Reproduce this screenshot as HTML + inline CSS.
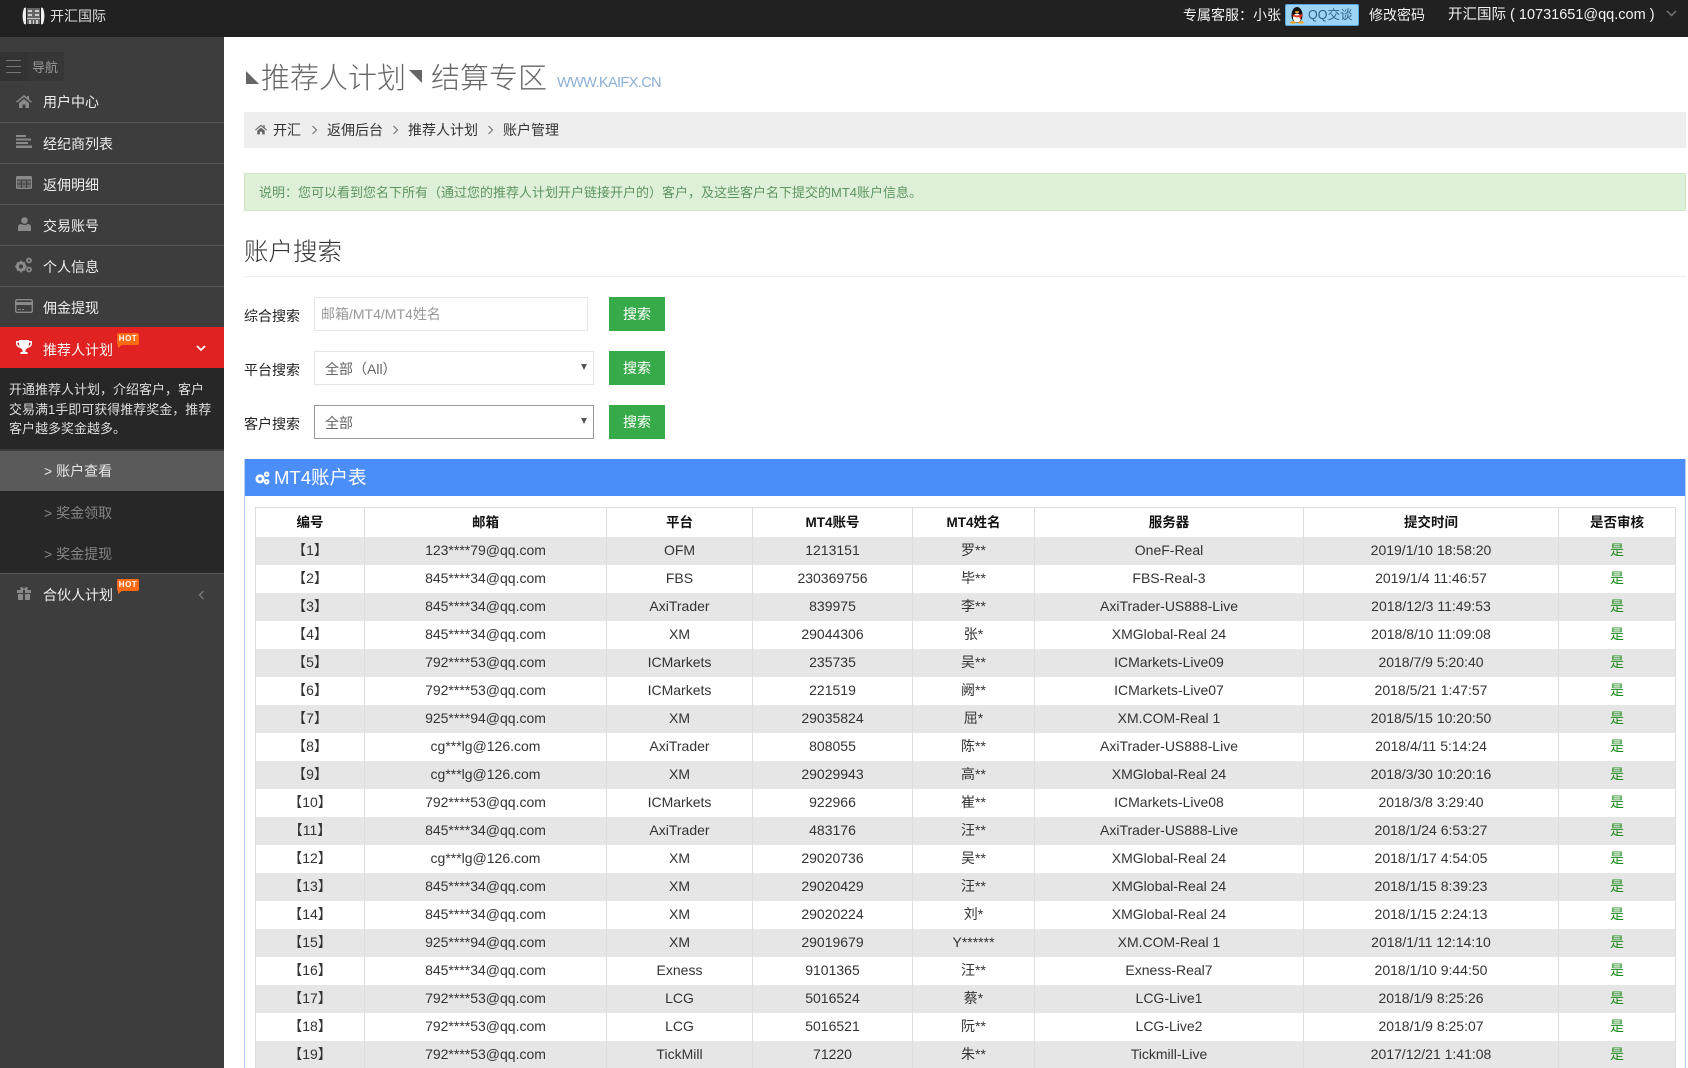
<!DOCTYPE html>
<html lang="zh"><head><meta charset="utf-8"><title>账户查看</title>
<style>
*{box-sizing:border-box}
html,body{margin:0;padding:0;width:1688px;height:1068px;overflow:hidden;background:#fff}
body{position:relative;font-family:"Liberation Sans","Noto Sans CJK SC",sans-serif;font-size:14px;color:#333}
.a{position:absolute;white-space:nowrap}
.t{position:absolute;white-space:nowrap;line-height:20px;height:20px}
.sep{position:absolute;left:0;width:224px;height:1px;background:#585858}
.m{color:#eee;left:43px}
svg{position:absolute;display:block}
.ic{fill:#8a8a8a}
.hot{position:absolute;left:117px;width:22px;height:12px;background:#ff6a13;border-radius:2px;color:#fff;font:bold 8px/12px "Liberation Sans",sans-serif;text-align:center;letter-spacing:.5px}
.hot:after{content:"";position:absolute;left:1px;top:11px;border-left:5px solid #ff6a13;border-bottom:4px solid transparent}
.box{position:absolute;background:#fff;border:1px solid #e5e5e5;line-height:34px;color:#666}
.btn{position:absolute;left:609px;width:56px;height:34px;background:#37aa4a;color:#fff;text-align:center;line-height:34px}
.arr{position:absolute;left:581px;border-left:3px solid transparent;border-right:3px solid transparent;border-top:6px solid #555}
table{position:absolute;left:255px;top:507px;width:1420px;border-collapse:collapse;table-layout:fixed;font-size:14px;color:#333}
td,th{height:28px;padding:0 0 2px;text-align:center;border-left:1px solid #ddd;border-right:1px solid #ddd;white-space:nowrap;line-height:20px;font-weight:400}
th{height:29px;font-size:13.5px;font-weight:700;color:#111;border-top:1px solid #ddd;padding:2px 0 0}
tbody tr:nth-child(odd){background:#e6e6e6}
td:last-child{color:#1e8a1e}
</style></head><body>
<!-- top bar -->
<div class="a" style="left:0;top:0;width:1688px;height:37px;background:#212121"></div>
<svg style="left:22px;top:7px" width="23" height="18" viewBox="0 0 23 18"><path d="M2 1q-3 8 0 16l2 .5V.5z" fill="#eee"/><path d="M21 1q3 8 0 16l-2 .5V.5z" fill="#eee"/><rect x="5" y="1" width="13" height="16" fill="#666"/><path d="M6 3h4v2H6zM13 3h4v2h-4zM6 7h4v2H6zM13 7h4v2h-4zM5 11h13v1H5zM7 13h2v4H7zM11 13h1v4h-1zM14 13h2v4h-2z" fill="#ccc"/></svg>
<div class="t" style="left:50px;top:6px;color:#ddd">开汇国际</div>
<div class="t" style="left:1183px;top:5px;color:#f2f2f2">专属客服：小张</div>
<div class="a" style="left:1285px;top:4px;width:74px;height:22px;background:#9bd4f5;border:1px solid #5aa5dc;border-radius:2px"></div>
<svg style="left:1289px;top:6px" width="16" height="18" viewBox="0 0 16 18"><ellipse cx="8" cy="9" rx="5.500" ry="8" fill="#111"/><ellipse cx="8" cy="12" rx="4" ry="4.500" fill="#fff"/><path d="M3 8q5 3 10 0l1 2-2 1v3l-2-3q-3 1-6-1z" fill="#e0301e"/><ellipse cx="4" cy="16.500" rx="3" ry="1.300" fill="#f5a623"/><ellipse cx="12" cy="16.500" rx="3" ry="1.300" fill="#f5a623"/><ellipse cx="8" cy="6" rx="2" ry="1" fill="#f5a623"/></svg>
<div class="t" style="left:1308px;top:5px;color:#2f5f84;font-size:12.500px">QQ交谈</div>
<div class="t" style="left:1369px;top:5px;color:#f2f2f2">修改密码</div>
<div class="t" style="left:1448px;top:5px;color:#f2f2f2;font-size:14.500px">开汇国际 ( 10731651@qq.com )</div>
<svg style="left:1666px;top:10px" width="11" height="8" viewBox="0 0 11 8"><path d="M1 1l4.500 4.500L10 1" fill="none" stroke="#777" stroke-width="1.500"/></svg>

<!-- sidebar -->
<div class="a" style="left:0;top:37px;width:224px;height:1031px;background:#3d3d3d"></div>
<div class="a" style="left:0;top:52px;width:28px;height:29px;background:#333"></div>
<div class="a" style="left:28px;top:52px;width:36px;height:29px;background:#363636"></div>
<svg style="left:6px;top:60px" width="15" height="13"><path d="M0 .5h15M0 6.500h15M0 12.500h15" stroke="#777"/></svg>
<div class="t" style="left:32px;top:58px;font-size:13px;color:#9a9a9a">导航</div>

<svg class="ic" style="left:16px;top:95px" width="16" height="13" viewBox="0 0 16 13"><path d="M8 0l3 2.500V1h2v3.200L16 6.800l-1 1L8 2 1 7.800l-1-1z"/><path d="M3 8l5-4 5 4v5H9.500V9.500h-3V13H3z"/></svg>
<div class="t m" style="top:92px">用户中心</div>
<div class="sep" style="top:122px"></div>
<svg class="ic" style="left:16px;top:135px" width="16" height="13" viewBox="0 0 16 13"><path d="M0 0h10v2H0zM0 3.500h15v2H0zM0 7h12v2H0zM0 10.500h16V13H0z"/></svg>
<div class="t m" style="top:134px">经纪商列表</div>
<div class="sep" style="top:163px"></div>
<svg style="left:16px;top:176px" width="16" height="13" viewBox="0 0 16 13"><rect x=".5" y=".5" width="15" height="12" rx="1" fill="#6e6e6e" stroke="#8a8a8a"/><path d="M1 4h14M1 8h14M5.500 4v8M10.500 4v8" stroke="#3d3d3d"/><rect x="1" y="1" width="14" height="2.500" fill="#8a8a8a"/></svg>
<div class="t m" style="top:175px">返佣明细</div>
<div class="sep" style="top:204px"></div>
<svg class="ic" style="left:18px;top:217px" width="13" height="14" viewBox="0 0 13 14"><circle cx="6.500" cy="3.500" r="3.300"/><path d="M0 14v-3.500Q0 7 3 7q3.500 2 7 0 3 0 3 3.500V14z"/></svg>
<div class="t m" style="top:216px">交易账号</div>
<div class="sep" style="top:245px"></div>
<svg style="left:15px;top:257px" width="18" height="16" viewBox="0 0 18 16"><circle cx="6" cy="9.500" r="3.600" fill="none" stroke="#8a8a8a" stroke-width="3"/><circle cx="14" cy="3.500" r="2" fill="none" stroke="#8a8a8a" stroke-width="1.800"/><circle cx="14" cy="12.500" r="2" fill="none" stroke="#8a8a8a" stroke-width="1.800"/><path d="M6 3.500v12M0 9.500h12M2 5.500l8 8M10 5.500l-8 8" stroke="#8a8a8a" stroke-width="1.500" stroke-dasharray="1.800 8.400"/></svg>
<div class="t m" style="top:257px">个人信息</div>
<div class="sep" style="top:286px"></div>
<svg style="left:15px;top:299px" width="18" height="14" viewBox="0 0 18 14"><rect x=".7" y=".7" width="16.600" height="12.600" rx="1.500" fill="none" stroke="#8a8a8a" stroke-width="1.400"/><rect x="1" y="3" width="16" height="3" fill="#8a8a8a"/><path d="M3 10.500h3M7 10.500h2" stroke="#8a8a8a"/></svg>
<div class="t m" style="top:298px">佣金提现</div>

<div class="a" style="left:0;top:327px;width:224px;height:41px;background:#e02222"></div>
<svg style="left:16px;top:340px" width="16" height="15" viewBox="0 0 16 15"><path d="M3 0h10v1h3v2.500Q16 7 11.500 8 10 9.500 9.500 10v2H11.500v2h-7v-2h2v-2Q6 9.500 4.500 8 0 7 0 3.500V1h3zM1.500 2.500v1Q1.500 5 3.500 6 3 4.500 3 2.500zM14.500 2.500H13q0 2-.5 3.500 2-1 2-2.500z" fill="#fff"/></svg>
<div class="t" style="left:43px;top:340px;color:#f5f5f5">推荐人计划</div>
<div class="hot" style="top:333px">HOT</div>
<svg style="left:196px;top:345px" width="10" height="7" viewBox="0 0 10 7"><path d="M1 1l4 4 4-4" fill="none" stroke="#fff" stroke-width="1.800"/></svg>

<div class="a" style="left:0;top:368px;width:224px;height:205px;background:#272727"></div>
<div class="a" style="left:9px;top:380px;font-size:13px;line-height:19.700px;color:#ddd">开通推荐人计划，介绍客户，客户<br>交易满1手即可获得推荐奖金，推荐<br>客户越多奖金越多。</div>
<div class="a" style="left:0;top:449px;width:224px;height:2px;background:#3a3a3a"></div>
<div class="a" style="left:0;top:451px;width:224px;height:40px;background:#5a5a5a"></div>
<div class="t" style="left:44px;top:461px;color:#e6e6e6">&gt; 账户查看</div>
<div class="t" style="left:44px;top:503px;color:#858585">&gt; 奖金领取</div>
<div class="t" style="left:44px;top:544px;color:#858585">&gt; 奖金提现</div>
<div class="sep" style="top:573px"></div>
<svg class="ic" style="left:17px;top:587px" width="14" height="13" viewBox="0 0 14 13"><path d="M0 3h6v3H0zM8 3h6v3H8zM1 7h5v6H1zM8 7h5v6H8zM4 0q3 0 3 3 0-3 3-3 1.500 1 0 3H4Q2.500 1 4 0z"/></svg>
<div class="t m" style="top:585px">合伙人计划</div>
<div class="hot" style="top:579px">HOT</div>
<svg style="left:198px;top:590px" width="7" height="10" viewBox="0 0 7 10"><path d="M5.500 1l-4 4 4 4" fill="none" stroke="#777" stroke-width="1.400"/></svg>

<!-- page title -->
<div class="a" style="left:246px;top:71px;border-left:13px solid transparent;border-bottom:13px solid #666;transform:scaleX(-1);width:0;height:0"></div>
<div class="a" style="left:261px;top:58px;font-size:29px;line-height:42px;color:#666;font-weight:300">推荐人计划</div>
<div class="a" style="left:409px;top:70px;border-left:13px solid transparent;border-top:13px solid #666;width:0;height:0"></div>
<div class="a" style="left:431px;top:58px;font-size:29px;line-height:42px;color:#666;font-weight:300">结算专区</div>
<div class="a" style="left:557px;top:73px;font-size:14.500px;line-height:20px;color:#8db0d6;letter-spacing:-.6px">WWW.KAIFX.CN</div>

<!-- breadcrumb -->
<div class="a" style="left:244px;top:112px;width:1442px;height:36px;background:#eee"></div>
<svg style="left:255px;top:124px" width="12" height="11" viewBox="0 0 16 13"><path fill="#666" d="M8 0l3 2.500V1h2v3.200L16 6.800l-1 1L8 2 1 7.800l-1-1z"/><path fill="#666" d="M3 8l5-4 5 4v5H9.500V9.500h-3V13H3z"/></svg>
<div class="t" style="left:273px;top:120px">开汇</div>
<svg style="left:311px;top:125px" width="7" height="10" viewBox="0 0 7 10"><path d="M1.500 1l4 4-4 4" fill="none" stroke="#777" stroke-width="1.200"/></svg>
<div class="t" style="left:327px;top:120px">返佣后台</div>
<svg style="left:392px;top:125px" width="7" height="10" viewBox="0 0 7 10"><path d="M1.500 1l4 4-4 4" fill="none" stroke="#777" stroke-width="1.200"/></svg>
<div class="t" style="left:408px;top:120px">推荐人计划</div>
<svg style="left:487px;top:125px" width="7" height="10" viewBox="0 0 7 10"><path d="M1.500 1l4 4-4 4" fill="none" stroke="#777" stroke-width="1.200"/></svg>
<div class="t" style="left:503px;top:120px">账户管理</div>

<!-- alert -->
<div class="a" style="left:244px;top:173px;width:1442px;height:38px;background:#dff0d8;border:1px solid #d0e6c6"></div>
<div class="t" style="left:259px;top:183px;font-size:13px;color:#5c9560">说明：您可以看到您名下所有（通过您的推荐人计划开户链接开户的）客户，及这些客户名下提交的MT4账户信息。</div>

<!-- search -->
<div class="a" style="left:244px;top:236px;font-size:24.500px;line-height:34px;color:#333;font-weight:300">账户搜索</div>
<div class="a" style="left:244px;top:276px;width:1442px;height:1px;background:#eee"></div>

<div class="t" style="left:244px;top:306px;color:#222">综合搜索</div>
<div class="box" style="left:314px;top:297px;width:274px;height:34px;padding-left:6px;color:#999;line-height:32px">邮箱/MT4/MT4姓名</div>
<div class="btn" style="top:297px">搜索</div>

<div class="t" style="left:244px;top:360px;color:#222">平台搜索</div>
<div class="box" style="left:314px;top:351px;width:280px;height:34px;padding-left:10px">全部（All）</div>
<div class="arr" style="top:364px"></div>
<div class="btn" style="top:351px">搜索</div>

<div class="t" style="left:244px;top:414px;color:#222">客户搜索</div>
<div class="box" style="left:314px;top:405px;width:280px;height:34px;padding-left:10px;border-color:#999">全部</div>
<div class="arr" style="top:418px"></div>
<div class="btn" style="top:405px">搜索</div>

<!-- panel -->
<div class="a" style="left:244px;top:459px;width:1442px;height:609px;border-left:1px solid #b5d0fb;border-right:1px solid #b5d0fb"></div>
<div class="a" style="left:245px;top:459px;width:1440px;height:37px;background:#4c8ef8"></div>
<svg style="left:255px;top:471px" width="15" height="14" viewBox="0 0 18 16"><circle cx="6" cy="9" r="3.800" fill="none" stroke="#fff" stroke-width="3.400"/><circle cx="14" cy="3.500" r="2.200" fill="none" stroke="#fff" stroke-width="2.200"/><circle cx="14" cy="12.500" r="2.200" fill="none" stroke="#fff" stroke-width="2.200"/></svg>
<div class="a" style="left:274px;top:465px;font-size:18.500px;line-height:26px;color:#fff">MT4账户表</div>

<table>
<colgroup><col style="width:109px"><col style="width:242px"><col style="width:146px"><col style="width:160px"><col style="width:122px"><col style="width:269px"><col style="width:255px"><col style="width:117px"></colgroup>
<thead><tr><th>编号</th><th>邮箱</th><th>平台</th><th>MT4账号</th><th>MT4姓名</th><th>服务器</th><th>提交时间</th><th>是否审核</th></tr></thead>
<tbody>
<tr><td>【1】</td><td>123****79@qq.com</td><td>OFM</td><td>1213151</td><td>罗**</td><td>OneF-Real</td><td>2019/1/10 18:58:20</td><td>是</td></tr>
<tr><td>【2】</td><td>845****34@qq.com</td><td>FBS</td><td>230369756</td><td>毕**</td><td>FBS-Real-3</td><td>2019/1/4 11:46:57</td><td>是</td></tr>
<tr><td>【3】</td><td>845****34@qq.com</td><td>AxiTrader</td><td>839975</td><td>李**</td><td>AxiTrader-US888-Live</td><td>2018/12/3 11:49:53</td><td>是</td></tr>
<tr><td>【4】</td><td>845****34@qq.com</td><td>XM</td><td>29044306</td><td>张*</td><td>XMGlobal-Real 24</td><td>2018/8/10 11:09:08</td><td>是</td></tr>
<tr><td>【5】</td><td>792****53@qq.com</td><td>ICMarkets</td><td>235735</td><td>吴**</td><td>ICMarkets-Live09</td><td>2018/7/9 5:20:40</td><td>是</td></tr>
<tr><td>【6】</td><td>792****53@qq.com</td><td>ICMarkets</td><td>221519</td><td>阙**</td><td>ICMarkets-Live07</td><td>2018/5/21 1:47:57</td><td>是</td></tr>
<tr><td>【7】</td><td>925****94@qq.com</td><td>XM</td><td>29035824</td><td>屈*</td><td>XM.COM-Real 1</td><td>2018/5/15 10:20:50</td><td>是</td></tr>
<tr><td>【8】</td><td>cg***lg@126.com</td><td>AxiTrader</td><td>808055</td><td>陈**</td><td>AxiTrader-US888-Live</td><td>2018/4/11 5:14:24</td><td>是</td></tr>
<tr><td>【9】</td><td>cg***lg@126.com</td><td>XM</td><td>29029943</td><td>高**</td><td>XMGlobal-Real 24</td><td>2018/3/30 10:20:16</td><td>是</td></tr>
<tr><td>【10】</td><td>792****53@qq.com</td><td>ICMarkets</td><td>922966</td><td>崔**</td><td>ICMarkets-Live08</td><td>2018/3/8 3:29:40</td><td>是</td></tr>
<tr><td>【11】</td><td>845****34@qq.com</td><td>AxiTrader</td><td>483176</td><td>汪**</td><td>AxiTrader-US888-Live</td><td>2018/1/24 6:53:27</td><td>是</td></tr>
<tr><td>【12】</td><td>cg***lg@126.com</td><td>XM</td><td>29020736</td><td>吴**</td><td>XMGlobal-Real 24</td><td>2018/1/17 4:54:05</td><td>是</td></tr>
<tr><td>【13】</td><td>845****34@qq.com</td><td>XM</td><td>29020429</td><td>汪**</td><td>XMGlobal-Real 24</td><td>2018/1/15 8:39:23</td><td>是</td></tr>
<tr><td>【14】</td><td>845****34@qq.com</td><td>XM</td><td>29020224</td><td>刘*</td><td>XMGlobal-Real 24</td><td>2018/1/15 2:24:13</td><td>是</td></tr>
<tr><td>【15】</td><td>925****94@qq.com</td><td>XM</td><td>29019679</td><td>Y******</td><td>XM.COM-Real 1</td><td>2018/1/11 12:14:10</td><td>是</td></tr>
<tr><td>【16】</td><td>845****34@qq.com</td><td>Exness</td><td>9101365</td><td>汪**</td><td>Exness-Real7</td><td>2018/1/10 9:44:50</td><td>是</td></tr>
<tr><td>【17】</td><td>792****53@qq.com</td><td>LCG</td><td>5016524</td><td>蔡*</td><td>LCG-Live1</td><td>2018/1/9 8:25:26</td><td>是</td></tr>
<tr><td>【18】</td><td>792****53@qq.com</td><td>LCG</td><td>5016521</td><td>阮**</td><td>LCG-Live2</td><td>2018/1/9 8:25:07</td><td>是</td></tr>
<tr><td>【19】</td><td>792****53@qq.com</td><td>TickMill</td><td>71220</td><td>朱**</td><td>Tickmill-Live</td><td>2017/12/21 1:41:08</td><td>是</td></tr>
</tbody></table>
</body></html>
